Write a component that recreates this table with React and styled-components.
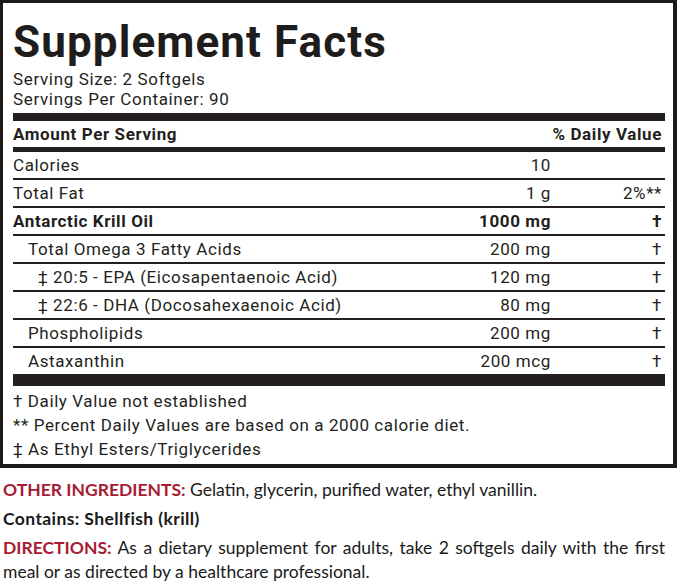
import React from "react";
import styled, { createGlobalStyle } from "styled-components";

const Global = createGlobalStyle`
  html, body { margin: 0; padding: 0; background: #fff; }
  body { font-family: Roboto, "Liberation Sans", sans-serif; color: #231f20; }
`;

const Page = styled.div`
  width: 679px;
  height: 582px;
  overflow: hidden;
  background: #fff;
`;

const Label = styled.section`
  box-sizing: border-box;
  width: 677px;
  border-style: solid;
  border-color: #1d1a17;
  border-width: 3px 4px 4px 3px;
  padding: 16px 8px 0 10px;
  height: 468px;
`;

const Title = styled.h1`
  margin: 0;
  font-family: Roboto, "Liberation Sans", sans-serif;
  font-weight: 700;
  font-size: 44px;
  line-height: 46px;
  letter-spacing: 1.1px;
  color: #1f1d1c;
`;

const Serving = styled.div`
  font-size: 17px;
  line-height: 20px;
  letter-spacing: 0.65px;
`;

const ServingBlock = styled.div`
  margin-top: 4px;
`;

const Bar = styled.div`
  height: ${(p) => p.$h}px;
  background: #231f20;
  margin-top: ${(p) => p.$mt || 0}px;
`;

const Row = styled.div`
  display: grid;
  grid-template-columns: 1fr 120px 111px;
  padding-right: 3px;
  height: ${(p) => p.$h || 26}px;
  align-items: center;
  font-size: 17px;
  letter-spacing: 0.6px;
  font-weight: ${(p) => (p.$bold ? 700 : 400)};
  border-bottom: ${(p) => (p.$line ? "2px solid #231f20" : "none")};
`;

const Name = styled.span`
  padding-left: ${(p) => p.$indent || 0}px;
  white-space: nowrap;
`;

const Num = styled.span`
  text-align: right;
  white-space: nowrap;
`;

const Foot = styled.div`
  font-size: 17px;
  line-height: 24px;
  letter-spacing: 0.6px;
  padding-top: 3px;
`;

const Below = styled.div`
  font-family: Lato, "Open Sans", sans-serif;
  font-size: 17.5px;
  color: #1a1a1a;
  padding: 10px 14px 0 3px;
`;

const Para = styled.div`
  margin: 0 0 ${(p) => p.$mb || 0}px;
  line-height: 24px;
  font-weight: ${(p) => (p.$bold ? 700 : 400)};
  letter-spacing: ${(p) => (p.$bold ? "0.4px" : "0")};
  text-align: ${(p) => (p.$justify ? "justify" : "left")};
  text-align-last: ${(p) => (p.$justify ? "justify" : "auto")};
  white-space: nowrap;
`;

const Red = styled.span`
  color: #a71c33;
  font-weight: 700;
`;

const rows = [
  { name: "Calories", amt: "10", dv: "", indent: 0 },
  { name: "Total Fat", amt: "1 g", dv: "2%**", indent: 0 },
  { name: "Antarctic Krill Oil", amt: "1000 mg", dv: "†", indent: 0, bold: true },
  { name: "Total Omega 3 Fatty Acids", amt: "200 mg", dv: "†", indent: 15 },
  { name: "‡ 20:5 - EPA (Eicosapentaenoic Acid)", amt: "120 mg", dv: "†", indent: 25 },
  { name: "‡ 22:6 - DHA (Docosahexaenoic Acid)", amt: "80 mg", dv: "†", indent: 25 },
  { name: "Phospholipids", amt: "200 mg", dv: "†", indent: 15 },
  { name: "Astaxanthin", amt: "200 mcg", dv: "†", indent: 15 },
];

export default function App() {
  return (
    <Page>
      <Global />
      <Label>
        <Title>Supplement Facts</Title>
        <ServingBlock>
          <Serving>Serving Size: 2 Softgels</Serving>
          <Serving>Servings Per Container: 90</Serving>
        </ServingBlock>
        <Bar $h={8} $mt={4} />
        <Row $bold $h={26}>
          <Name>Amount Per Serving</Name>
          <Num />
          <Num>% Daily Value</Num>
        </Row>
        <Bar $h={5} />
        {rows.map((r, i) => (
          <Row key={i} $bold={r.bold} $line={i < rows.length - 1}>
            <Name $indent={r.indent}>{r.name}</Name>
            <Num>{r.amt}</Num>
            <Num>{r.dv}</Num>
          </Row>
        ))}
        <Bar $h={12} />
        <Foot>
          <div>† Daily Value not established</div>
          <div>** Percent Daily Values are based on a 2000 calorie diet.</div>
          <div>‡ As Ethyl Esters/Triglycerides</div>
        </Foot>
      </Label>
      <Below>
        <Para $mb={5}>
          <Red>OTHER INGREDIENTS:</Red> Gelatin, glycerin, purified water, ethyl vanillin.
        </Para>
        <Para $bold $mb={5}>Contains: Shellfish (krill)</Para>
        <Para $justify>
          <Red>DIRECTIONS:</Red> As a dietary supplement for adults, take 2 softgels daily with the first
        </Para>
        <Para>meal or as directed by a healthcare professional.</Para>
      </Below>
    </Page>
  );
}
